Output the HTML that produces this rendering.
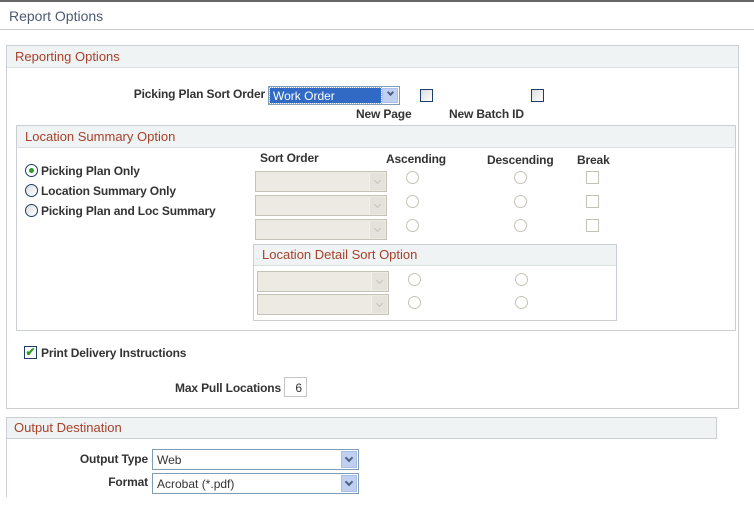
<!DOCTYPE html>
<html><head><meta charset="utf-8"><style>
*{margin:0;padding:0;box-sizing:border-box}
body{width:754px;height:508px;background:#fff;position:relative;overflow:hidden;font-family:"Liberation Sans",Arial,sans-serif;font-size:12px;color:#333}
.a{position:absolute}
.lbl{position:absolute;font-weight:bold;color:#333;font-size:12px;white-space:nowrap;letter-spacing:-0.15px}
.box{position:absolute;border:1px solid #cbcfd3}
.hdr{position:absolute;left:0;right:0;top:0;height:22px;background:#eff3f3;border-bottom:1px solid #dadfe0;color:#a6412b;font-size:13px;padding:3px 0 0 8px}
.sel{position:absolute;border:1px solid #c5c3b5;background:#eceae2}
.sel i{position:absolute;right:1px;top:1px;bottom:1px;width:16px;background:#e4e2da;border-left:1px solid #f2f1ec}
.sel i:after{content:"";position:absolute;left:5px;top:5px;width:4px;height:4px;border-right:1.5px solid #c5c3b5;border-bottom:1.5px solid #c5c3b5;transform:rotate(45deg)}
.rad{position:absolute;width:13px;height:13px;border-radius:50%;border:1px solid #c5c3b5;background:#fff}
.cb{position:absolute;width:13px;height:13px;border:1px solid #c5c3b5;background:#fff}
.sel2{position:absolute;border:1px solid #7f9db9;background:#fff;font-size:12px;padding:3px 0 0 4px;color:#333}
.sel2 i{position:absolute;right:1px;top:1px;bottom:1px;width:16px;background:#bfd0f1;border:1px solid #a9bfea}
.sel2 i:after{content:"";position:absolute;left:4px;top:3px;width:4px;height:4px;border-right:2px solid #4d6185;border-bottom:2px solid #4d6185;transform:rotate(45deg)}
</style></head><body>
<div class="a" style="left:0;top:0;width:754px;height:2px;background:#666"></div>
<div class="a" style="left:9px;top:8px;font-size:14px;color:#4d5a72">Report Options</div>
<div class="a" style="left:0;top:29px;width:754px;height:1px;background:#ccc"></div>

<div class="box" style="left:6px;top:45px;width:733px;height:364px"><div class="hdr">Reporting Options</div></div>

<div class="lbl" style="right:489px;top:87px">Picking Plan Sort Order</div>
<div class="a" style="left:268px;top:86px;width:132px;height:19px;border:1px solid #7f9db9;background:#fff">
 <div class="a" style="left:1px;top:1px;width:111px;height:15px;background:#316ac5;color:#fff;font-size:12px;padding:1px 0 0 3px;outline:1px dotted #e0a020">Work Order</div>
 <i class="a" style="right:1px;top:1px;width:16px;height:15px;background:#bfd0f1;border:1px solid #a9bfea"></i>
 <span class="a" style="right:6px;top:3px;width:5px;height:5px;border-right:2px solid #4d6185;border-bottom:2px solid #4d6185;transform:rotate(45deg)"></span>
</div>
<div class="a" style="left:420px;top:89px;width:13px;height:13px;border:1px solid #1c3f6b;background:linear-gradient(135deg,#ddd,#fff)"></div>
<div class="a" style="left:531px;top:89px;width:13px;height:13px;border:1px solid #1c3f6b;background:linear-gradient(135deg,#ddd,#fff)"></div>
<div class="lbl" style="left:356px;top:107px">New Page</div>
<div class="lbl" style="left:449px;top:107px">New Batch ID</div>

<div class="box" style="left:16px;top:125px;width:720px;height:206px"><div class="hdr">Location Summary Option</div></div>
<div class="a" style="left:25px;top:164px;width:13px;height:13px;border-radius:50%;border:1px solid #1c3f6b;background:#fff"><div class="a" style="left:3px;top:3px;width:5px;height:5px;border-radius:50%;background:#2a9a2a"></div></div>
<div class="a" style="left:25px;top:184px;width:13px;height:13px;border-radius:50%;border:1px solid #1c3f6b;background:linear-gradient(135deg,#ddd,#fff)"></div>
<div class="a" style="left:25px;top:204px;width:13px;height:13px;border-radius:50%;border:1px solid #1c3f6b;background:linear-gradient(135deg,#ddd,#fff)"></div>
<div class="lbl" style="left:41px;top:164px">Picking Plan Only</div>
<div class="lbl" style="left:41px;top:184px">Location Summary Only</div>
<div class="lbl" style="left:41px;top:204px">Picking Plan and Loc Summary</div>
<div class="lbl" style="left:260px;top:151px">Sort Order</div>
<div class="lbl" style="left:386px;top:152px">Ascending</div>
<div class="lbl" style="left:487px;top:153px">Descending</div>
<div class="lbl" style="left:577px;top:153px">Break</div>
<div class="sel" style="left:255px;top:171px;width:132px;height:21px"><i></i></div>
<div class="sel" style="left:255px;top:195px;width:132px;height:21px"><i></i></div>
<div class="sel" style="left:255px;top:219px;width:132px;height:21px"><i></i></div>
<div class="rad" style="left:406px;top:171px"></div><div class="rad" style="left:514px;top:171px"></div><div class="cb" style="left:586px;top:171px"></div>
<div class="rad" style="left:406px;top:195px"></div><div class="rad" style="left:514px;top:195px"></div><div class="cb" style="left:586px;top:195px"></div>
<div class="rad" style="left:406px;top:219px"></div><div class="rad" style="left:514px;top:219px"></div><div class="cb" style="left:586px;top:219px"></div>

<div class="box" style="left:253px;top:244px;width:364px;height:77px"><div class="hdr" style="height:21px;padding-top:2px">Location Detail Sort Option</div></div>
<div class="sel" style="left:257px;top:271px;width:132px;height:21px"><i></i></div>
<div class="sel" style="left:257px;top:294px;width:132px;height:21px"><i></i></div>
<div class="rad" style="left:408px;top:273px"></div><div class="rad" style="left:515px;top:273px"></div>
<div class="rad" style="left:408px;top:296px"></div><div class="rad" style="left:515px;top:296px"></div>

<div class="a" style="left:24px;top:346px;width:13px;height:13px;border:1px solid #1c3f6b;background:#fff;color:#2a9a2a;font-size:12px;line-height:11px;text-align:center;font-weight:bold">✔</div>
<div class="lbl" style="left:41px;top:346px">Print Delivery Instructions</div>
<div class="lbl" style="right:473px;top:381px">Max Pull Locations</div>
<div class="a" style="left:284px;top:377px;width:23px;height:20px;border:1px solid #c5c5c5;background:#fff;text-align:right;padding:3px 4px 0 0;font-size:12px">6</div>

<div class="a" style="left:6px;top:417px;width:1px;height:80px;background:#cbcfd3"></div>
<div class="box" style="left:6px;top:417px;width:711px;height:22px"><div class="hdr" style="top:-1px;left:-1px;right:-1px;border:none;background:transparent">Output Destination</div></div>
<div class="a" style="left:7px;top:418px;width:709px;height:20px;background:#eff3f3;z-index:-1"></div>
<div class="lbl" style="right:606px;top:452px">Output Type</div>
<div class="lbl" style="right:606px;top:475px">Format</div>
<div class="sel2" style="left:152px;top:449px;width:207px;height:21px">Web<i></i></div>
<div class="sel2" style="left:152px;top:473px;width:207px;height:21px">Acrobat (*.pdf)<i></i></div>
</body></html>
